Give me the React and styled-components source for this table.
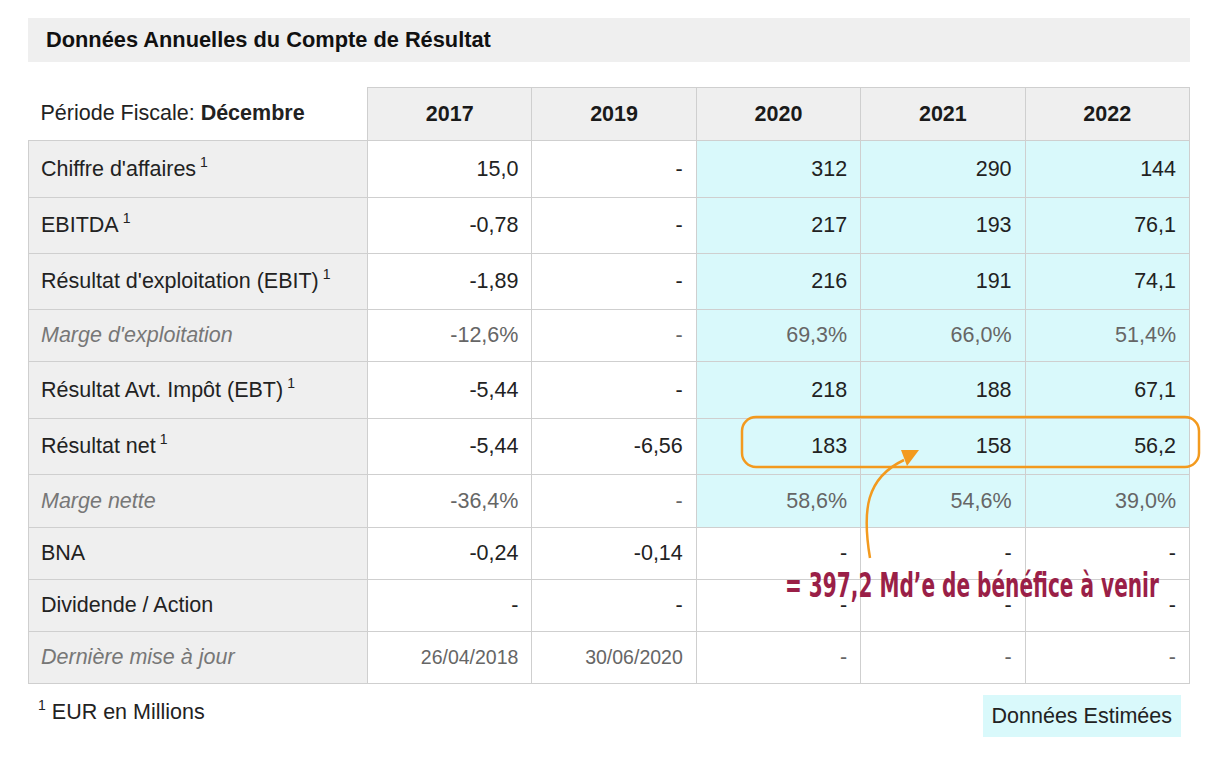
import React from "react";
import styled, { createGlobalStyle } from "styled-components";

const GlobalStyle = createGlobalStyle`
  body {
    margin: 0;
    background: #fff;
    font-family: "Liberation Sans", Arial, sans-serif;
    color: #222;
  }
`;

const years = ["2017", "2019", "2020", "2021", "2022"];

const rows = [
  { label: "Chiffre d'affaires", sup: true, h: 57, values: ["15,0", "-", "312", "290", "144"] },
  { label: "EBITDA", sup: true, h: 56, values: ["-0,78", "-", "217", "193", "76,1"] },
  { label: "Résultat d'exploitation (EBIT)", sup: true, h: 56, values: ["-1,89", "-", "216", "191", "74,1"] },
  { label: "Marge d'exploitation", muted: true, h: 52, values: ["-12,6%", "-", "69,3%", "66,0%", "51,4%"] },
  { label: "Résultat Avt. Impôt (EBT)", sup: true, h: 57, values: ["-5,44", "-", "218", "188", "67,1"] },
  { label: "Résultat net", sup: true, h: 56, values: ["-5,44", "-6,56", "183", "158", "56,2"] },
  { label: "Marge nette", muted: true, h: 53, values: ["-36,4%", "-", "58,6%", "54,6%", "39,0%"] },
  { label: "BNA", plain: true, h: 52, values: ["-0,24", "-0,14", "-", "-", "-"] },
  { label: "Dividende / Action", plain: true, h: 52, values: ["-", "-", "-", "-", "-"] },
  { label: "Dernière mise à jour", muted: true, small: true, plain: true, h: 52, values: ["26/04/2018", "30/06/2020", "-", "-", "-"] },
];

const Page = styled.div`
  position: relative;
  width: 1162px;
  padding: 18px 0 0 28px;
`;

const TitleBar = styled.div`
  height: 44px;
  background: #efefef;
  display: flex;
  align-items: center;
  padding-left: 18px;
  font-size: 21.8px;
  font-weight: bold;
  color: #111;
`;

const Table = styled.table`
  margin-top: 25px;
  width: 1162px;
  border-collapse: collapse;
  table-layout: fixed;
  font-size: 21.5px;

  th, td {
    box-sizing: border-box;
  }
`;

const HeadLabel = styled.th`
  width: 339px;
  height: 53px;
  text-align: left;
  font-weight: normal;
  padding: 0 12px;
  border-bottom: 1px solid #cfcfcf;
  b { font-weight: bold; }
`;

const YearCell = styled.th`
  background: #efefef;
  border: 1px solid #cfcfcf;
  font-weight: bold;
  text-align: center;
  color: #1a1a1a;
`;

const Row = styled.tr`
  height: ${(p) => p.$h}px;
`;

const LabelCell = styled.td`
  background: #efefef;
  border: 1px solid #cfcfcf;
  padding: 0 12px;
  white-space: nowrap;
  color: ${(p) => (p.$muted ? "#777" : "#222")};
  font-style: ${(p) => (p.$muted ? "italic" : "normal")};
`;

const Sup = styled.sup`
  font-size: 14px;
  margin-left: 4px;
  vertical-align: 9px;
  line-height: 0;
`;

const ValueCell = styled.td`
  border: 1px solid #cfcfcf;
  text-align: right;
  padding: 0 13px;
  white-space: nowrap;
  background: ${(p) => (p.$estimate ? "#d9f9fb" : "#fff")};
  color: ${(p) => (p.$muted ? "#666" : "#222")};
  font-size: ${(p) => (p.$small ? "19.5px" : "21.5px")};
`;

const Footer = styled.div`
  display: flex;
  justify-content: space-between;
  align-items: flex-start;
  margin-top: 11px;
  padding: 0 9px 0 10px;
  font-size: 21.5px;
`;

const Note = styled.div`
  padding-top: 5px;
  sup {
    font-size: 14px;
    vertical-align: 9px;
    line-height: 0;
    margin-right: 6px;
  }
`;

const Legend = styled.div`
  background: #d9f9fb;
  padding: 0 9px;
  height: 42px;
  display: flex;
  align-items: center;
  color: #222;
`;

const Overlay = styled.svg`
  position: absolute;
  left: 0;
  top: 0;
  pointer-events: none;
  overflow: visible;
`;

const Callout = styled.div`
  position: absolute;
  left: 785px;
  top: 566px;
  font-family: "DejaVu Sans Condensed", "DejaVu Sans", sans-serif;
  font-stretch: condensed;
  font-weight: bold;
  font-size: 33px;
  line-height: 40px;
  color: #9a1f47;
  white-space: nowrap;
  transform: scaleX(0.677);
  transform-origin: left top;
`;

export default function App() {
  return (
    <Page>
      <GlobalStyle />
      <TitleBar>Données Annuelles du Compte de Résultat</TitleBar>
      <Table>
        <thead>
          <tr>
            <HeadLabel>
              Période Fiscale: <b>Décembre</b>
            </HeadLabel>
            {years.map((y) => (
              <YearCell key={y}>{y}</YearCell>
            ))}
          </tr>
        </thead>
        <tbody>
          {rows.map((r) => (
            <Row key={r.label} $h={r.h}>
              <LabelCell $muted={r.muted}>
                {r.label}
                {r.sup && <Sup>1</Sup>}
              </LabelCell>
              {r.values.map((v, i) => (
                <ValueCell
                  key={i}
                  $estimate={i >= 2 && !r.plain}
                  $muted={r.muted}
                  $small={r.small && v !== "-"}
                >
                  {v}
                </ValueCell>
              ))}
            </Row>
          ))}
        </tbody>
      </Table>
      <Footer>
        <Note>
          <sup>1</sup>EUR en Millions
        </Note>
        <Legend>Données Estimées</Legend>
      </Footer>

      <Overlay width="1208" height="758">
        <rect x="742" y="417" width="457" height="50" rx="14" fill="none" stroke="#f39a1e" strokeWidth="2.5" />
        <path d="M870 558 C 862 510, 866 478, 904 460" fill="none" stroke="#f39a1e" strokeWidth="2.5" />
        <polygon points="901,450 919,450 907,466" fill="#f39a1e" />
      </Overlay>
      <Callout>= 397,2 Md’e de bénéfice à venir</Callout>
    </Page>
  );
}
